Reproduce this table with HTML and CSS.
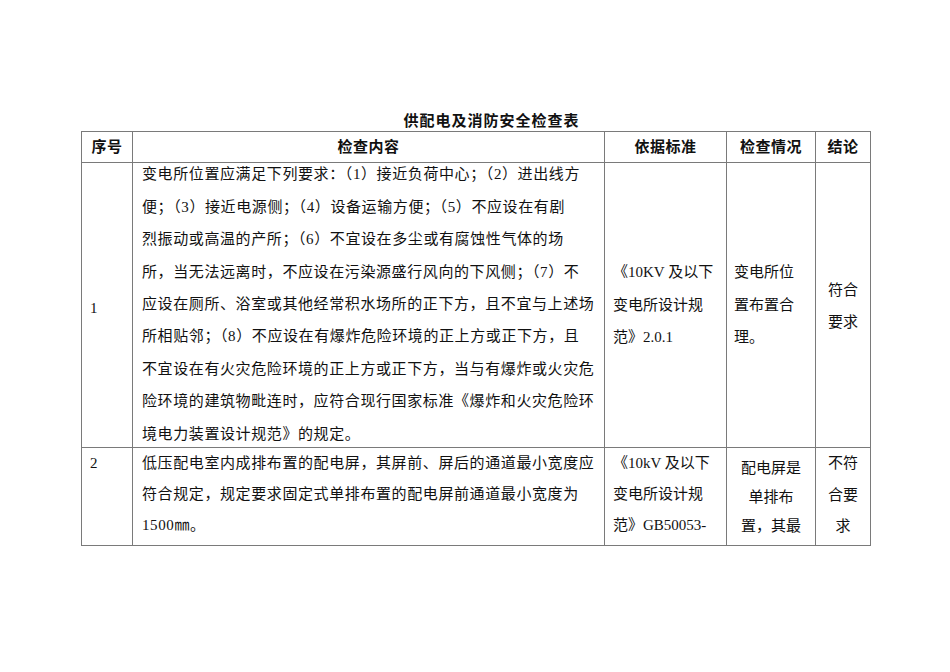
FILE: index.html
```html
<!DOCTYPE html>
<html lang="zh-CN">
<head>
<meta charset="utf-8">
<title>供配电及消防安全检查表</title>
<link rel="stylesheet" href="styles.css">
</head>
<body>
<div class="page">
  <h1 class="title">供配电及消防安全检查表</h1>
  <table class="sheet">
    <colgroup>
      <col class="c-no">
      <col class="c-content">
      <col class="c-basis">
      <col class="c-status">
      <col class="c-result">
    </colgroup>
    <thead>
      <tr class="head">
        <th>序号</th>
        <th>检查内容</th>
        <th>依据标准</th>
        <th>检查情况</th>
        <th>结论</th>
      </tr>
    </thead>
    <tbody>
      <tr class="row1">
        <td class="no">1</td>
        <td class="content">
          <div class="lines">变电所位置应满足下列要求：（1）接近负荷中心；（2）进出线方<br>便；（3）接近电源侧；（4）设备运输方便；（5）不应设在有剧<br>烈振动或高温的产所；（6）不宜设在多尘或有腐蚀性气体的场<br>所，当无法远离时，不应设在污染源盛行风向的下风侧；（7）不<br>应设在厕所、浴室或其他经常积水场所的正下方，且不宜与上述场<br>所相贴邻；（8）不应设在有爆炸危险环境的正上方或正下方，且<br>不宜设在有火灾危险环境的正上方或正下方，当与有爆炸或火灾危<br>险环境的建筑物毗连时，应符合现行国家标准《爆炸和火灾危险环<br>境电力装置设计规范》的规定。</div>
        </td>
        <td class="basis">《10KV 及以下<br>变电所设计规<br>范》2.0.1</td>
        <td class="status">变电所位<br>置布置合<br>理。</td>
        <td class="result">符合<br>要求</td>
      </tr>
      <tr class="row2">
        <td class="no">2</td>
        <td class="content">低压配电室内成排布置的配电屏，其屏前、屏后的通道最小宽度应<br>符合规定，规定要求固定式单排布置的配电屏前通道最小宽度为<br>1500㎜。</td>
        <td class="basis">《10kV 及以下<br>变电所设计规<br>范》GB50053-</td>
        <td class="status">配电屏是<br>单排布<br>置，其最</td>
        <td class="result">不符<br>合要<br>求</td>
      </tr>
    </tbody>
  </table>
</div>
</body>
</html>
```

FILE: styles.css
```css
html, body {
  margin: 0;
  padding: 0;
  background: #ffffff;
}

body {
  width: 950px;
  height: 672px;
  overflow: hidden;
  font-family: "Liberation Serif", "Noto Sans CJK SC", serif;
  color: #111111;
}

.page {
  padding: 111px 0 0 81px;
}

.title {
  margin: 0;
  width: 789px;
  box-sizing: border-box;
  padding-left: 32px;
  font-family: "Liberation Sans", "Noto Sans CJK SC", sans-serif;
  font-size: 15px;
  font-weight: 700;
  letter-spacing: 1px;
  line-height: 20px;
  text-align: center;
  color: #111111;
}

.sheet {
  border-collapse: collapse;
  table-layout: fixed;
  width: 789px;
  font-size: 15px;
}

.c-no { width: 51px; }
.c-content { width: 472px; }
.c-basis { width: 122px; }
.c-status { width: 89px; }
.c-result { width: 55px; }

.sheet th,
.sheet td {
  border: 1px solid #7a7a7a;
  padding: 0;
}

.head th {
  height: 30px;
  line-height: 30px;
  font-family: "Liberation Sans", "Noto Sans CJK SC", sans-serif;
  font-weight: 700;
  font-size: 15px;
  letter-spacing: 0.5px;
  text-align: center;
  vertical-align: middle;
  color: #111111;
}

.sheet .content {
  letter-spacing: 0.6px;
}

.row1 td {
  vertical-align: middle;
  line-height: 32.4px;
}

.row1 .no {
  padding: 6px 0 0 8px;
}

.row1 .content {
  padding-left: 9px;
}

.lines {
  margin: -4.7px 0 -2.9px 0;
  white-space: nowrap;
}

.row1 .basis {
  padding-left: 8px;
  white-space: nowrap;
}

.row1 .status {
  padding-left: 7px;
}

.row1 .result {
  text-align: center;
  line-height: 32px;
  padding-top: 2px;
}

.row2 td {
  height: 97px;
  vertical-align: top;
  line-height: 31px;
  white-space: nowrap;
}

.row2 .no {
  padding-left: 8px;
}

.row2 .content {
  padding-left: 9px;
}

.row2 .basis {
  padding-left: 8px;
}

.row2 .status {
  text-align: center;
  line-height: 29px;
  padding-top: 6px;
  height: 91px;
}

.row2 .result {
  text-align: center;
  line-height: 31.5px;
}
```
